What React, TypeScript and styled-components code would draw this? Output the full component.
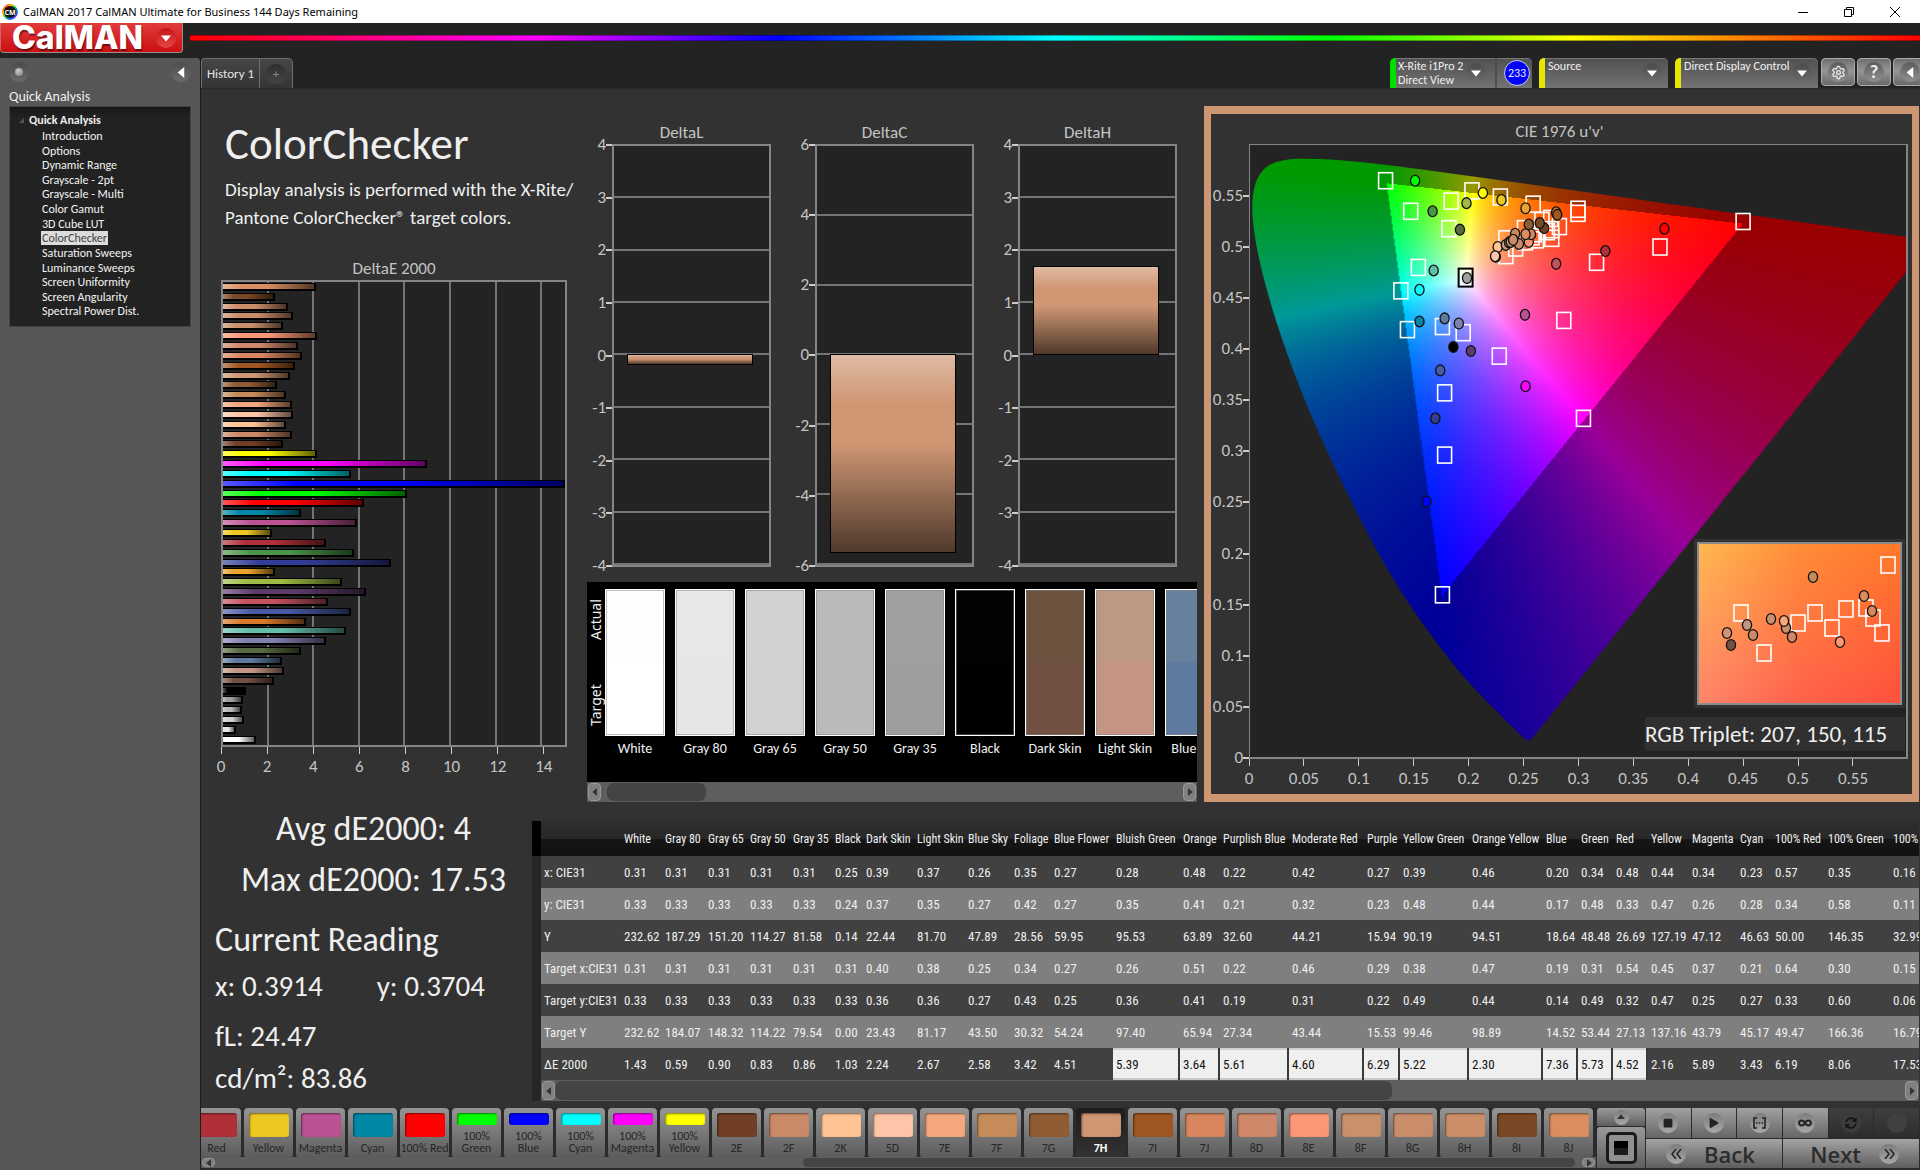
import React, { useLayoutEffect, useRef } from 'react';
import styled, { createGlobalStyle, css } from 'styled-components';
import { FaPlay, FaStop, FaInfinity, FaSyncAlt } from 'react-icons/fa';
import { LuSettings } from 'react-icons/lu';

const Global = createGlobalStyle`
  *, *::before, *::after { box-sizing: border-box; }
  html, body, #root { height: 100%; }
  body { margin: 0; background: #232323; color: #efefef; font-family: Carlito, Lato, sans-serif; font-size: 17px; overflow: hidden; }
  button, select { font: inherit; color: inherit; border: 0; padding: 0; margin: 0; background: none; }
  ul { list-style: none; margin: 0; padding: 0; }
  h1, h2, p { margin: 0; font-weight: 400; }
`;

/* ---------- data ---------- */

type Patch = { name: string; color: string; actual?: string; de: number };

const patches: Patch[] = [
  { name: 'White', color: '#ffffff', actual: '#fffdff', de: 1.43 },
  { name: 'Gray 80', color: '#e6e6e6', actual: '#e8e7e5', de: 0.59 },
  { name: 'Gray 65', color: '#d1d1d1', actual: '#d4d1d2', de: 0.9 },
  { name: 'Gray 50', color: '#bababa', actual: '#bababa', de: 0.83 },
  { name: 'Gray 35', color: '#9e9e9e', actual: '#a0a0a0', de: 0.86 },
  { name: 'Black', color: '#000000', actual: '#020204', de: 1.03 },
  { name: 'Dark Skin', color: '#735142', actual: '#6d5240', de: 2.24 },
  { name: 'Light Skin', color: '#c39582', actual: '#bb9985', de: 2.67 },
  { name: 'Blue Sky', color: '#5e7a9f', actual: '#67809d', de: 2.58 },
  { name: 'Foliage', color: '#586b40', de: 3.42 },
  { name: 'Blue Flower', color: '#8280b1', de: 4.51 },
  { name: 'Bluish Green', color: '#63bda9', de: 5.39 },
  { name: 'Orange', color: '#d97a2b', de: 3.64 },
  { name: 'Purplish Blue', color: '#4a5ba6', de: 5.61 },
  { name: 'Moderate Red', color: '#c5525f', de: 4.6 },
  { name: 'Purple', color: '#5d3c6c', de: 6.29 },
  { name: 'Yellow Green', color: '#a0bb45', de: 5.22 },
  { name: 'Orange Yellow', color: '#eaa32d', de: 2.3 },
  { name: 'Blue', color: '#333c96', de: 7.36 },
  { name: 'Green', color: '#4a9548', de: 5.73 },
  { name: 'Red', color: '#b03039', de: 4.52 },
  { name: 'Yellow', color: '#edc823', de: 2.16 },
  { name: 'Magenta', color: '#bb5293', de: 5.89 },
  { name: 'Cyan', color: '#0087a6', de: 3.43 },
  { name: '100% Red', color: '#ff0000', de: 6.19 },
  { name: '100% Green', color: '#00ff00', de: 8.06 },
  { name: '100% Blue', color: '#0000ff', de: 17.53 },
  { name: '100% Cyan', color: '#00ffff', de: 5.6 },
  { name: '100% Magenta', color: '#ff00ff', de: 8.95 },
  { name: '100% Yellow', color: '#ffff00', de: 4.13 },
  { name: '2E', color: '#703f26', de: 2.65 },
  { name: '2F', color: '#cb8a67', de: 3.03 },
  { name: '2K', color: '#ffc394', de: 2.78 },
  { name: '5D', color: '#ffc5a8', de: 3.08 },
  { name: '7E', color: '#f5a87d', de: 3.03 },
  { name: '7F', color: '#c58c5a', de: 2.78 },
  { name: '7G', color: '#905c33', de: 2.35 },
  { name: '7H', color: '#cf9673', de: 2.93 },
  { name: '7I', color: '#a05620', de: 3.17 },
  { name: '7J', color: '#d8865e', de: 3.47 },
  { name: '8D', color: '#cf8869', de: 3.27 },
  { name: '8E', color: '#fc9775', de: 4.13 },
  { name: '8F', color: '#c9906c', de: 2.65 },
  { name: '8G', color: '#ca8d6a', de: 3.05 },
  { name: '8H', color: '#cc8e69', de: 2.85 },
  { name: '8I', color: '#7a4824', de: 2.27 },
  { name: '8J', color: '#da8d5f', de: 4.1 },
];

const columnWidths = [80, 41, 43, 42, 43, 42, 31, 51, 51, 46, 40, 62, 67, 40, 69, 75, 36, 69, 74, 35, 35, 35, 41, 48, 35, 53, 65, 60];
const tableWidth = columnWidths.reduce((sum, w) => sum + w, 0);

const readings: { label: string; values: string }[] = [
  { label: 'x: CIE31', values: '0.31 0.31 0.31 0.31 0.31 0.25 0.39 0.37 0.26 0.35 0.27 0.28 0.48 0.22 0.42 0.27 0.39 0.46 0.20 0.34 0.48 0.44 0.34 0.23 0.57 0.35 0.16' },
  { label: 'y: CIE31', values: '0.33 0.33 0.33 0.33 0.33 0.24 0.37 0.35 0.27 0.42 0.27 0.35 0.41 0.21 0.32 0.23 0.48 0.44 0.17 0.48 0.33 0.47 0.26 0.28 0.34 0.58 0.11' },
  { label: 'Y', values: '232.62 187.29 151.20 114.27 81.58 0.14 22.44 81.70 47.89 28.56 59.95 95.53 63.89 32.60 44.21 15.94 90.19 94.51 18.64 48.48 26.69 127.19 47.12 46.63 50.00 146.35 32.99' },
  { label: 'Target x:CIE31', values: '0.31 0.31 0.31 0.31 0.31 0.31 0.40 0.38 0.25 0.34 0.27 0.26 0.51 0.22 0.46 0.29 0.38 0.47 0.19 0.31 0.54 0.45 0.37 0.21 0.64 0.30 0.15' },
  { label: 'Target y:CIE31', values: '0.33 0.33 0.33 0.33 0.33 0.33 0.36 0.36 0.27 0.43 0.25 0.36 0.41 0.19 0.31 0.22 0.49 0.44 0.14 0.49 0.32 0.47 0.25 0.27 0.33 0.60 0.06' },
  { label: 'Target Y', values: '232.62 184.07 148.32 114.22 79.54 0.00 23.43 81.17 43.50 30.32 54.24 97.40 65.94 27.34 43.44 15.53 99.46 98.89 14.52 53.44 27.13 137.16 43.79 45.17 49.47 166.36 16.79' },
  { label: 'ΔE 2000', values: '1.43 0.59 0.90 0.83 0.86 1.03 2.24 2.67 2.58 3.42 4.51 5.39 3.64 5.61 4.60 6.29 5.22 2.30 7.36 5.73 4.52 2.16 5.89 3.43 6.19 8.06 17.53' },
];
const editableFrom = 11;
const editableTo = 20;

const targets: [number, number][] = [
  [0.124, 0.565], [0.147, 0.535], [0.184, 0.545], [0.203, 0.555], [0.229, 0.549], [0.259, 0.542], [0.3, 0.537], [0.3, 0.533],
  [0.451, 0.525], [0.375, 0.5], [0.317, 0.485], [0.182, 0.518], [0.154, 0.48], [0.138, 0.457], [0.144, 0.419], [0.176, 0.422],
  [0.195, 0.416], [0.228, 0.393], [0.287, 0.428], [0.305, 0.332], [0.178, 0.357], [0.178, 0.296], [0.176, 0.159],
  [0.234, 0.4915], [0.234, 0.508], [0.243, 0.499], [0.251, 0.518], [0.252, 0.505], [0.262, 0.507], [0.26, 0.513], [0.267, 0.526],
  [0.272, 0.515], [0.275, 0.528], [0.276, 0.5085], [0.276, 0.517], [0.283, 0.52], [0.258, 0.51],
];

const measured: [number, number, string][] = [
  [0.151, 0.565, '#00ff00'], [0.167, 0.535, '#4a9548'], [0.198, 0.543, '#a0bb45'], [0.213, 0.553, '#ffff00'], [0.23, 0.546, '#edc823'],
  [0.252, 0.538, '#eaa32d'], [0.28, 0.534, '#d97a2b'], [0.281, 0.5315, '#a05620'], [0.192, 0.517, '#586b40'], [0.168, 0.477, '#63bda9'],
  [0.155, 0.458, '#00ffff'], [0.2515, 0.4335, '#bb5293'], [0.28, 0.4835, '#c5525f'], [0.325, 0.496, '#b03039'], [0.379, 0.518, '#ff0000'],
  [0.155, 0.427, '#0087a6'], [0.178, 0.43, '#5e7a9f'], [0.191, 0.425, '#8280b1'], [0.186, 0.402, '#000000'], [0.202, 0.398, '#5d3c6c'],
  [0.174, 0.379, '#4a5ba6'], [0.252, 0.3635, '#ff00ff'], [0.1695, 0.332, '#333c96'], [0.1615, 0.2505, '#0000ff'],
  [0.2266, 0.5, '#ffc394'], [0.2248, 0.4905, '#735142'], [0.2242, 0.491, '#ffc5a8'], [0.234, 0.502, '#c39582'], [0.237, 0.5045, '#cc8e69'],
  [0.2385, 0.505, '#c9906c'], [0.2425, 0.513, '#c58c5a'], [0.246, 0.503, '#cf8869'], [0.2407, 0.507, '#ca8d6a'], [0.255, 0.522, '#905c33'],
  [0.255, 0.505, '#fc9775'], [0.257, 0.5125, '#d8865e'], [0.252, 0.5125, '#da8d5f'], [0.269, 0.5185, '#703f26'], [0.265, 0.5235, '#7a4824'],
];

const insetTargets: [number, number][] = [[44, 71], [67, 111], [101, 81], [118, 71], [135, 86], [149, 67], [169, 66], [176, 76], [185, 91], [191, 23]];
const insetMeasured: [number, number, string][] = [
  [30, 91, '#cf9673'], [34, 103, '#735142'], [50, 83, '#c39582'], [56, 93, '#cb8a67'], [74, 77, '#c9906c'], [89, 86, '#cc8e69'],
  [87, 79, '#f5a87d'], [95, 95, '#cf8869'], [143, 100, '#fc9775'], [116, 35, '#c58c5a'], [167, 54, '#da8d5f'], [175, 69, '#d8865e'],
];

const spectralLocus: [number, number][] = [
  [0.1741, 0.005], [0.1733, 0.0048], [0.1714, 0.0051], [0.1689, 0.0069], [0.1644, 0.0109], [0.1566, 0.0177], [0.144, 0.0297], [0.1241, 0.0578],
  [0.1096, 0.0868], [0.0913, 0.1327], [0.0687, 0.2007], [0.0454, 0.295], [0.0235, 0.4127], [0.0082, 0.5384], [0.0039, 0.6548],
  [0.0139, 0.7502], [0.0389, 0.812], [0.0743, 0.8338], [0.1142, 0.8262], [0.1547, 0.8059], [0.2296, 0.7543], [0.3016, 0.6923],
  [0.3731, 0.6245], [0.4441, 0.5547], [0.5125, 0.4866], [0.5752, 0.4242], [0.627, 0.3725], [0.6915, 0.3083], [0.7347, 0.2653],
];

/* ---------- window chrome ---------- */

const Window = styled.div`display: flex; flex-direction: column; height: 100vh; overflow: hidden; background: #232323;`;
const TitleBar = styled.header`
  display: flex; align-items: center; height: 23px; padding: 0 2px; flex: none;
  background: #fff; color: #000; font-family: "Noto Sans", sans-serif; font-size: 11px;
`;
const WindowTitle = styled.span`flex: 1; padding-left: 5px;`;
const WindowButton = styled.button`width: 46px; height: 23px; display: grid; place-items: center;`;
const Banner = styled.div`display: flex; align-items: flex-start; gap: 7px; height: 35px; flex: none;`;
const Logo = styled.button`
  display: flex; align-items: center; justify-content: space-between; width: 183px; height: 30px; padding: 0 6px 0 11px;
  border: 1px solid #9a8a8a; border-top: 0; border-left-color: #c66; border-radius: 0 0 4px 4px;
  background: linear-gradient(#e23c3c, #cb0f12); color: #fff; font-family: Inter, sans-serif; font-weight: 800; font-size: 32px; line-height: 28px;
  text-shadow: 1px 2px 1px rgba(0, 0, 0, 0.45);
`;
const Round = styled.span<{ $size?: number; $tone?: string }>`
  display: grid; place-items: center; flex: none; width: ${p => p.$size ?? 20}px; height: ${p => p.$size ?? 20}px; border-radius: 50%;
  background: ${p => p.$tone ?? 'linear-gradient(#4c4c4c, #6c6c6c)'};
`;
const Rainbow = styled.div`
  flex: 1; height: 6px; margin-top: 12px; border: solid rgba(0, 0, 0, 0.35); border-width: 1px 0;
  background: linear-gradient(to right, #f00, #f0f 20%, #00f 34%, #0ff 50%, #0f0 66%, #ff0 80%, #f00);
`;
const Body = styled.div`display: flex; flex: 1; min-height: 0;`;

/* ---------- sidebar ---------- */

const Sidebar = styled.aside`width: 201px; flex: none; padding: 4px 9px 0 9px; background: #565656; border-right: 1px solid #1c1c1c; border-radius: 0 4px 0 0;`;
const SidebarTools = styled.div`display: flex; justify-content: space-between;`;
const SidebarTitle = styled.h2`margin-top: 7px; padding-bottom: 2px; font-size: 14px; line-height: 15px;`;
const Tree = styled.nav`height: 221px; padding: 6px 7px 0 9px; border: 1px solid #444; background: linear-gradient(#161616, #222 10px); font-size: 12px;`;
const TreeRoot = styled.button`display: flex; align-items: center; gap: 5px; height: 14px; font-weight: 700; line-height: 14px;`;
const TreeItems = styled.ul`display: grid; grid-auto-rows: 1fr; height: 190px; margin-top: 2px; padding-left: 22px;`;
const TreeLink = styled.a<{ $active: boolean }>`
  display: inline-block; padding: 0 1px; line-height: 14px; color: #f2f2f2; text-decoration: none;
  ${p => p.$active && css`background: #dcdcdc; color: #444;`}
`;

/* ---------- tabs and toolbar ---------- */

const Main = styled.main`display: flex; flex-direction: column; flex: 1; min-width: 0; background: #323232;`;
const TabBar = styled.div`display: flex; justify-content: space-between; height: 31px; flex: none; background: #232323; border-bottom: 1px solid #2a2a2a;`;
const Tabs = styled.div`display: flex; border: 1px solid #6e6e6e; border-bottom: 0; border-radius: 4px 5px 0 0; background: linear-gradient(#464646, #343434); font-size: 13px;`;
const Tab = styled.button`padding: 0 4px; width: 58px; border-right: 1px solid #6e6e6e; color: #e4e4e4; white-space: nowrap;`;
const AddTab = styled.button`width: 32px; display: grid; place-items: center; color: #888;`;
const Tools = styled.div`display: flex; align-items: flex-start; gap: 7px; height: 30px;`;
const Device = styled.div<{ $led: string; $width: number }>`
  position: relative; display: flex; width: ${p => p.$width}px; height: 30px; border-left: 6px solid ${p => p.$led};
  border-radius: 5px 5px 0 0; background: linear-gradient(#505050, #727272); box-shadow: inset 0 1px #777; font-size: 12px; line-height: 14px;
`;
const DeviceButton = styled.button`display: flex; align-items: center; justify-content: space-between; flex: 1; padding: 0 9px 0 2px; border-right: 2px solid #4c4c4c; text-align: left; white-space: pre;`;
const DeviceSelect = styled.select`appearance: none; width: 100%; height: 30px; padding: 1px 0 15px 3px; line-height: 14px; option { color: #000; }`;
const SelectArrow = styled.span`position: absolute; right: 6px; top: 5px; pointer-events: none;`;
const MeterCount = styled.span`align-self: center; margin: 0 2px 0 7px; display: grid; place-items: center; width: 26px; height: 26px; border-radius: 50%; border: 1px solid #ccd; background: #00f; font-size: 12px; line-height: 12px;`;
const ToolButtons = styled.div`display: flex; gap: 2px; margin-left: -4px; width: 99px; overflow: hidden;`;
const ToolButton = styled.button`display: grid; place-items: center; flex: none; width: 34px; height: 28px; border: 1px solid #aaa; border-radius: 4px; background: linear-gradient(#6f6f6f, #969696 45%, #6a6a6a); color: #eee; font-weight: 700; font-size: 19px; line-height: 20px;`;

/* ---------- charts ---------- */

const Analysis = styled.section`display: grid; grid-template-columns: minmax(0, 386fr) minmax(0, 617fr) minmax(0, 716fr); flex: none; padding-top: 17px;`;
const Intro = styled.div`padding: 15px 20px 0;`;
const PageTitle = styled.h1`padding-left: 4px; font-size: 45px; line-height: 46px;`;
const Lead = styled.p`padding: 9px 0 0 4px; font-size: 19px; line-height: 28px; white-space: nowrap;`;
const ChartTitle = styled.h2`color: #c4c4c4; font-size: 17px; line-height: 20px; text-align: center;`;
const plotFrame = css`border: 2px solid #858585; background-color: #232323;`;
const DeltaETitle = styled(ChartTitle)`margin-top: 27px; padding-bottom: 1px;`;
const BarsPlot = styled.div`
  ${plotFrame} display: flex; flex-direction: column; height: 467px; overflow: hidden;
  background-image: repeating-linear-gradient(to right, transparent 0 calc(100% * 2 / 15 - 2px), #747474 0 calc(100% * 2 / 15));
`;
const BarSlot = styled.div`flex: 1; display: flex; align-items: center;`;
const Bar = styled.div`
  height: 8px; border: 1px solid #000; border-width: 1px 2px 2px 0;
  background-image: linear-gradient(to right, rgba(255, 255, 255, 0.35), transparent 22%, transparent 50%, rgba(0, 0, 0, 0.62));
`;
const XAxis = styled.div<{ $step: number; $count: number }>`
  display: grid; grid-template-columns: repeat(${p => p.$count}, ${p => p.$step}%); margin-left: -${p => p.$step / 2}%; width: 100%;
  color: #c4c4c4; text-align: center; line-height: 18px; white-space: nowrap;
`;
const XTick = styled.span`&::before { content: ''; display: block; width: 1px; height: 7px; margin: 0 auto 4px; background: #ccc; }`;
const YAxis = styled.div<{ $width: number; $top?: number }>`
  display: flex; flex-direction: column; justify-content: space-between; flex: none; width: ${p => p.$width}px; padding: ${p => p.$top ?? 0}px 0 0; color: #c4c4c4;
`;
const YTick = styled.span`
  display: flex; justify-content: flex-end; align-items: center; height: 2px; line-height: 2px;
  &::after { content: ''; width: 6px; height: 2px; background: #ccc; }
`;

const Middle = styled.div`display: flex; flex-direction: column; padding: 17px 7px 0 0; min-width: 0;`;
const Deltas = styled.div`display: grid; grid-template-columns: repeat(3, 1fr); gap: 24px; padding: 0 20px 0 5px; height: 459px;`;
const DeltaBody = styled.div`display: flex; height: 424px; padding-top: 1px;`;
const DeltaPlot = styled.div<{ $lines: number }>`
  ${plotFrame} flex: 1; display: flex; flex-direction: column; padding: 0 9% 0 7%;
  background-image: repeating-linear-gradient(to bottom, transparent 0 calc(100% / ${p => p.$lines} - 2px), #747474 0 calc(100% / ${p => p.$lines}));
`;
const DeltaBar = styled.div`
  border: 1px solid #000; background-color: #cf9673; flex: none;
  background-image: linear-gradient(rgba(255, 255, 255, 0.35), transparent 25%, transparent 45%, rgba(0, 0, 0, 0.62));
`;

const Swatches = styled.div`display: flex; height: 200px; padding-top: 7px; background: #000; overflow: hidden; gap: 10px;`;
const SwatchAxis = styled.div`
  display: flex; justify-content: space-between; writing-mode: vertical-rl; transform: rotate(180deg); flex: none; width: 18px; height: 147px; margin-right: -10px;
  padding: 10px 0; font-family: "Noto Sans", sans-serif; font-size: 14px; line-height: 18px;
`;
const Swatch = styled.figure`flex: none; width: 60px; margin: 0; text-align: center; font-size: 14px; line-height: 26px; white-space: nowrap;`;
const SwatchColor = styled.div<{ $actual: string; $target: string }>`
  height: 147px; border: 1px solid #fff; box-shadow: inset 0 0 0 1px rgba(128, 128, 128, 0.5);
  background: linear-gradient(${p => p.$actual} 50%, ${p => p.$target} 50%);
`;

const ScrollTrack = styled.div<{ $h: number }>`display: flex; align-items: center; height: ${p => p.$h}px; padding: 1px; background: #5e5e5e; flex: none; min-width: 0;`;
const ScrollArrow = styled.button`flex: none; width: 13px; height: 100%; display: grid; place-items: center; border-radius: 4px; background: #808080; border: 1px solid #999; color: #333;`;
const ScrollRail = styled.div`flex: 1; height: 100%; display: flex;`;
const ScrollThumb = styled.div`height: 100%; border-radius: 7px; background: #444;`;

/* ---------- chromaticity ---------- */

const CiePanel = styled.div`border: solid #cf9673; border-width: 8px 7px; margin-right: 1px; padding: 6px 4px 0 0; background: #323232; height: 696px; margin-bottom: 19px;`;
const CieTitle = styled(ChartTitle)`height: 24px; line-height: 23px;`;
const CieBody = styled.div`display: flex; height: 615px;`;
const CiePlot = styled.div`${plotFrame} border-width: 1px 2px 2px 1px; position: relative; flex: 1; min-width: 0; overflow: hidden;`;
const Field = styled.canvas`display: block; width: 100%; height: 100%;`;
const Overlay = styled.svg`position: absolute; inset: 0; width: 100%; height: 100%;`;
const Inset = styled.div`position: absolute; right: 1px; bottom: 49px; width: 211px; height: 169px; padding: 3px; background: #323232;`;
const Triplet = styled.output`position: absolute; right: 1px; bottom: 6px; width: 260px; height: 34px; background: #303030; font-size: 23px; line-height: 34px;`;
const CieXAxis = styled.div`margin-left: 38px;`;

/* ---------- readings ---------- */

const Results = styled.section`display: flex; flex: none;`;
const Summary = styled.div`width: 331px; flex: none; padding-left: 14px; white-space: nowrap;`;
const Headlines = styled.div`margin: -18px 0 15px;`;
const Headline = styled.p`font-size: 34px; line-height: 51px; text-align: center;`;
const Current = styled.h2`font-size: 34px; line-height: 40px;`;
const Values = styled.p<{ $gap: number }>`display: flex; gap: 54px; padding-top: ${p => p.$gap}px; font-size: 29px; line-height: 36px;`;
const TableArea = styled.div`flex: 1; min-width: 0; margin-right: 1px; padding-left: 9px; background: linear-gradient(#000 35px, #262626 35px); overflow: hidden;`;
const Grid = styled.table`table-layout: fixed; border-collapse: collapse; font-family: "Roboto Condensed", Carlito, sans-serif; font-size: 13px; white-space: nowrap;`;
const HeadCell = styled.th`height: 35px; padding: 0 0 0 3px; text-align: left; font-weight: 400; font-size: 12px;`;
const HeadRow = styled.tr`background: linear-gradient(#2e2e2e, #282828 50%, #161616 51%, #111);`;
const DataRow = styled.tr<{ $alt: boolean }>`background: ${p => (p.$alt ? '#7f7f7f' : '#414141')};`;
const Cell = styled.td<{ $edit?: boolean }>`
  height: 32px; padding: 0 0 0 3px; text-align: left;
  ${p => p.$edit && css`background: #efefef; color: #111; box-shadow: inset -2px 0 #3a3a3a, inset 0 -2px #c8c8c8, inset 0 2px #d0d0d0;`}
`;
const RowLabel = styled.th`height: 32px; padding: 0 0 0 3px; text-align: left; font-weight: 400;`;

/* ---------- bottom bar ---------- */

const BottomBar = styled.footer`display: flex; gap: 1px; margin-top: auto; padding: 0 1px 2px 0; height: 62px; flex: none; background: #2b2b2b;`;
const Strip = styled.div`flex: 1; min-width: 0; display: flex; flex-direction: column;`;
const PatchRow = styled.div`display: flex; justify-content: flex-end; gap: 3px; height: 49px; padding-right: 3px; overflow: hidden;`;
const PatchButton = styled.button<{ $active: boolean }>`
  flex: none; display: flex; flex-direction: column; align-items: center; width: 49px; height: 49px; padding: 5px 0 3px; border-radius: 4px 4px 2px 2px;
  background: ${p => (p.$active ? 'linear-gradient(#1c1c1c, #333)' : 'linear-gradient(#959595, #5c5c5c)')}; color: ${p => (p.$active ? '#fff' : '#262626')};
  font-weight: ${p => (p.$active ? 700 : 400)}; font-size: 12px; line-height: 12px;
`;
const PatchColor = styled.span<{ $color: string }>`width: 40px; flex: 1; border-radius: 3px; background: ${p => p.$color}; box-shadow: inset 1px 1px 2px rgba(0, 0, 0, 0.5);`;
const PatchLabel = styled.span<{ $two: boolean }>`display: block; padding-top: 5px; white-space: pre;`;
const Flyout = styled.div`width: 48px; display: grid; grid-template-rows: 18px 1fr; gap: 1px;`;
const FlyoutButton = styled.button`display: grid; place-items: center; border-radius: 3px 3px 0 0; background: linear-gradient(#9a9a9a, #5e5e5e);`;
const StopFrame = styled.span`display: grid; place-items: center; width: 31px; height: 32px; border: 3px solid #1a1a1a; border-radius: 5px; background: #909090;`;
const StopMark = styled.span`width: 14px; height: 14px; background: linear-gradient(#000 50%, #1c1c1c 50%);`;
const Transport = styled.div`width: 273px; display: grid; grid-template-columns: repeat(6, 1fr); grid-template-rows: 30px 1fr; gap: 1px;`;
const TransportButton = styled.button<{ $off?: boolean }>`
  display: grid; place-items: center; color: ${p => (p.$off ? '#151515' : '#222')};
  background: ${p => (p.$off ? 'linear-gradient(#3e3e3e, #2c2c2c)' : 'linear-gradient(#a0a0a0, #666)')};
`;
const StepButton = styled.button<{ $side: 'start' | 'end' }>`
  grid-column: span 3; display: flex; align-items: center; justify-content: flex-${p => p.$side}; gap: 18px; padding: 0 20px; background: linear-gradient(#a4a4a4, #5e5e5e); color: #2c2c2c;
  font-family: "Open Sans", sans-serif; font-weight: 600; font-size: 22px; line-height: 26px;
`;

/* ---------- pieces ---------- */

const Caret = ({ dir, size = 8, color = '#fff' }: { dir: 'down' | 'left' | 'right' | 'up'; size?: number; color?: string }) => {
  const turn = { down: 0, left: 90, up: 180, right: 270 }[dir];
  return (
    <svg width={size} height={size} viewBox="0 0 10 10" aria-hidden="true">
      <path d="M0 2.5h10L5 8.5z" fill={color} transform={`rotate(${turn} 5 5)`} />
    </svg>
  );
};

const Scrollbar = ({ height, start, length, label }: { height: number; start: number; length: number; label: string }) => (
  <ScrollTrack $h={height}>
    <ScrollArrow aria-label={`Scroll ${label} left`}><Caret dir="left" color="#333" /></ScrollArrow>
    <ScrollRail><ScrollThumb style={{ marginLeft: `${start}%`, width: `${length}%` }} /></ScrollRail>
    <ScrollArrow aria-label={`Scroll ${label} right`}><Caret dir="right" color="#333" /></ScrollArrow>
  </ScrollTrack>
);

const pages = ['Introduction', 'Options', 'Dynamic Range', 'Grayscale - 2pt', 'Grayscale - Multi', 'Color Gamut', '3D Cube LUT', 'ColorChecker',
  'Saturation Sweeps', 'Luminance Sweeps', 'Screen Uniformity', 'Screen Angularity', 'Spectral Power Dist.'];

const DeltaChart = ({ title, max, step, value }: { title: string; max: number; step: number; value: number }) => {
  const ticks: number[] = [];
  for (let t = max; t >= -max; t -= step) ticks.push(t);
  const top = ((max - Math.max(value, 0)) / (2 * max)) * 419;
  const height = (Math.abs(value) / (2 * max)) * 419 + 2;
  return (
    <div>
      <ChartTitle>{title}</ChartTitle>
      <DeltaBody>
        <YAxis $width={20}>{ticks.map(t => <YTick key={t}>{t}</YTick>)}</YAxis>
        <DeltaPlot $lines={ticks.length - 1}><DeltaBar style={{ marginTop: top - 2, height }} /></DeltaPlot>
      </DeltaBody>
    </div>
  );
};

const U_MAX = 0.6;
const V_MAX = 0.6;
const W = 658;
const H = 612;
const px = (u: number) => (u / U_MAX) * W;
const py = (v: number) => H - (v / V_MAX) * H;

function paintField(canvas: HTMLCanvasElement) {
  const ctx = canvas.getContext('2d');
  if (!ctx) return;
  const image = ctx.createImageData(W, H);
  for (let j = 0; j < H; j++) {
    for (let i = 0; i < W; i++) {
      const u = ((i + 0.5) / W) * U_MAX;
      const v = (1 - (j + 0.5) / H) * V_MAX;
      const d = 6 * u - 16 * v + 12;
      const x = (9 * u) / d;
      const y = (4 * v) / d;
      const z = 1 - x - y;
      const lin = [3.2406 * x - 1.5372 * y - 0.4986 * z, -0.9689 * x + 1.8758 * y + 0.0415 * z, 0.0557 * x - 0.204 * y + 1.057 * z];
      const dim = Math.min(...lin) < 0 ? 0.6 : 1;
      const peak = Math.max(...lin);
      const k = (j * W + i) * 4;
      lin.forEach((c, n) => { image.data[k + n] = (255 * dim * Math.max(c, 0)) / peak; });
      image.data[k + 3] = 255;
    }
  }
  ctx.putImageData(image, 0, 0);
  const uv = spectralLocus.map(([x, y]) => {
    const d = -2 * x + 12 * y + 3;
    return [px((4 * x) / d), py((9 * y) / d)];
  });
  ctx.globalCompositeOperation = 'destination-in';
  ctx.beginPath();
  ctx.moveTo(uv[0][0], uv[0][1]);
  for (let i = 1; i < uv.length - 1; i++) {
    ctx.quadraticCurveTo(uv[i][0], uv[i][1], (uv[i][0] + uv[i + 1][0]) / 2, (uv[i][1] + uv[i + 1][1]) / 2);
  }
  ctx.lineTo(uv[uv.length - 1][0], uv[uv.length - 1][1]);
  ctx.closePath();
  ctx.fill();
}

const Target = ({ x, y, dark }: { x: number; y: number; dark?: boolean }) => (
  <g fill="none">
    {dark && <rect x={x - 7} y={y - 9} width="14" height="18" stroke="#000" strokeWidth="2" />}
    <rect x={x - (dark ? 5 : 7)} y={y - (dark ? 7 : 8)} width={dark ? 10 : 14} height={dark ? 14 : 16} stroke="#fff" strokeWidth={dark ? 1 : 1.6} />
  </g>
);
const Dot = ({ x, y, fill }: { x: number; y: number; fill: string }) => <ellipse cx={x} cy={y} rx="4.6" ry="5.4" fill={fill} stroke="#111" strokeWidth="1.3" />;

const CieChart = () => {
  const field = useRef<HTMLCanvasElement>(null);
  useLayoutEffect(() => { if (field.current) paintField(field.current); }, []);
  const steps = Array.from({ length: 12 }, (_, i) => String(Math.round(i * 5) / 100));
  return (
    <CiePanel>
      <CieTitle>CIE 1976 u'v'</CieTitle>
      <CieBody>
        <YAxis $width={38} $top={51}>{[...steps].reverse().map(s => <YTick key={s}>{s}</YTick>)}</YAxis>
        <CiePlot>
          <Field ref={field} width={W} height={H} />
          <Overlay viewBox={`0 0 ${W} ${H}`} preserveAspectRatio="none" role="img" aria-label="Measured and target chromaticities">
            {targets.map(([u, v], i) => <Target key={i} x={px(u)} y={py(v)} />)}
            {measured.map(([u, v, c], i) => <Dot key={i} x={px(u)} y={py(v)} fill={c} />)}
            <Target x={px(0.1972)} y={py(0.47)} dark />
            <Dot x={px(0.1985)} y={py(0.4695)} fill="#a0a0a0" />
          </Overlay>
          <Inset>
            <svg width="205" height="163" viewBox="0 0 205 163" role="img" aria-label="Selected area enlarged">
              <defs>
                <linearGradient id="warm-left" x2="0" y2="1"><stop stopColor="#ffba52" /><stop offset="1" stopColor="#ff856c" /></linearGradient>
                <linearGradient id="warm-right" x2="0" y2="1"><stop stopColor="#ff782a" /><stop offset="1" stopColor="#ff503c" /></linearGradient>
                <linearGradient id="fade"><stop stopColor="#000" /><stop offset="0.5" stopColor="#aaa" /><stop offset="1" stopColor="#fff" /></linearGradient>
                <mask id="across"><rect width="205" height="163" fill="url(#fade)" /></mask>
              </defs>
              <rect width="205" height="163" fill="url(#warm-left)" />
              <rect width="205" height="163" fill="url(#warm-right)" mask="url(#across)" />
              {insetTargets.map(([x, y], i) => <Target key={i} x={x} y={y} />)}
              {insetMeasured.map(([x, y, c], i) => <Dot key={i} x={x} y={y} fill={c} />)}
              <rect x="1" y="1" width="203" height="161" fill="none" stroke="#8c8c8c" strokeWidth="2" />
            </svg>
          </Inset>
          <Triplet>RGB Triplet: 207, 150, 115</Triplet>
        </CiePlot>
      </CieBody>
      <CieXAxis><XAxis $count={12} $step={100 / 12}>{steps.map(s => <XTick key={s}>{s}</XTick>)}</XAxis></CieXAxis>
    </CiePanel>
  );
};

const stripPatches = patches.slice(20);
const knob = 'linear-gradient(#7c7c7c, #a8a8a8)';

export default function App() {
  return (
    <Window>
      <Global />
      <TitleBar>
        <svg width="16" height="18" viewBox="0 0 16 18" aria-hidden="true">
          <defs><linearGradient id="ring" x2="1" y2="1"><stop stopColor="#f03" /><stop offset="0.3" stopColor="#fb0" /><stop offset="0.5" stopColor="#0c4" /><stop offset="0.75" stopColor="#06f" /><stop offset="1" stopColor="#c0f" /></linearGradient></defs>
          <circle cx="8" cy="9" r="7" fill="#111" stroke="url(#ring)" strokeWidth="1.8" />
          <text x="8" y="11.5" fontSize="7" fontWeight="700" textAnchor="middle" fill="#fff">CM</text>
        </svg>
        <WindowTitle>CalMAN 2017 CalMAN Ultimate for Business 144 Days Remaining</WindowTitle>
        <WindowButton aria-label="Minimize"><svg width="10" height="10" stroke="#000"><path d="M0 5.5h10" /></svg></WindowButton>
        <WindowButton aria-label="Restore"><svg width="10" height="10" fill="none" stroke="#000"><path d="M.5 2.5h7v7h-7zM2.5 2.5v-2h7v7h-2" /></svg></WindowButton>
        <WindowButton aria-label="Close"><svg width="10" height="10" stroke="#000"><path d="M0 0l10 10M10 0L0 10" /></svg></WindowButton>
      </TitleBar>
      <Banner>
        <Logo>CalMAN<Round $tone="linear-gradient(#c81416, #e54848)"><Caret dir="down" size={10} /></Round></Logo>
        <Rainbow />
      </Banner>
      <Body>
        <Sidebar>
          <SidebarTools>
            <Round $tone="linear-gradient(#4a4a4a, #6a6a6a)"><Round $size={8} $tone="radial-gradient(circle at 40% 35%, #ccc, #777)" /></Round>
            <button aria-label="Collapse sidebar"><Round><Caret dir="left" size={11} /></Round></button>
          </SidebarTools>
          <SidebarTitle>Quick Analysis</SidebarTitle>
          <Tree aria-label="Quick Analysis">
            <TreeRoot><svg width="5" height="5" aria-hidden="true"><path d="M5 0v5H0z" fill="#555" /></svg>Quick Analysis</TreeRoot>
            <TreeItems>{pages.map(p => <li key={p}><TreeLink href="#" $active={p === 'ColorChecker'}>{p}</TreeLink></li>)}</TreeItems>
          </Tree>
        </Sidebar>
        <Main>
          <TabBar>
            <Tabs><Tab>History 1</Tab><AddTab aria-label="Add history"><Round $tone="linear-gradient(#2e2e2e, #444)">+</Round></AddTab></Tabs>
            <Tools>
              <Device $led="#00e000" $width={142}>
                <DeviceButton>{'X-Rite i1Pro 2\nDirect View'}<Round><Caret dir="down" size={10} /></Round></DeviceButton>
                <MeterCount>233</MeterCount>
              </Device>
              <Device $led="#e6e600" $width={129}>
                <DeviceSelect aria-label="Source"><option>Source</option></DeviceSelect>
                <SelectArrow><Round><Caret dir="down" size={10} /></Round></SelectArrow>
              </Device>
              <Device $led="#e6e600" $width={143}>
                <DeviceSelect aria-label="Display"><option>Direct Display Control</option></DeviceSelect>
                <SelectArrow><Round><Caret dir="down" size={10} /></Round></SelectArrow>
              </Device>
              <ToolButtons>
                <ToolButton aria-label="Settings"><Round $tone="linear-gradient(#5c5c5c, #909090)"><LuSettings size={15} /></Round></ToolButton>
                <ToolButton aria-label="Help"><Round $tone="linear-gradient(#5c5c5c, #909090)">?</Round></ToolButton>
                <ToolButton aria-label="Collapse panel"><Round $tone="linear-gradient(#5c5c5c, #909090)"><Caret dir="left" size={11} /></Round></ToolButton>
              </ToolButtons>
            </Tools>
          </TabBar>

          <Analysis>
            <Intro>
              <PageTitle>ColorChecker</PageTitle>
              <Lead>Display analysis is performed with the X-Rite/<br />Pantone ColorChecker® target colors.</Lead>
              <DeltaETitle>DeltaE 2000</DeltaETitle>
              <BarsPlot>
                {[...patches].reverse().map(p => (
                  <BarSlot key={p.name}><Bar style={{ width: `${Math.min((p.de / 15) * 100, 102)}%`, backgroundColor: p.color }} /></BarSlot>
                ))}
              </BarsPlot>
              <XAxis $count={8} $step={200 / 15}>{[0, 2, 4, 6, 8, 10, 12, 14].map(t => <XTick key={t}>{t}</XTick>)}</XAxis>
            </Intro>
            <Middle>
              <Deltas>
                <DeltaChart title="DeltaL" max={4} step={1} value={-0.18} />
                <DeltaChart title="DeltaC" max={6} step={2} value={-5.66} />
                <DeltaChart title="DeltaH" max={4} step={1} value={1.68} />
              </Deltas>
              <Swatches>
                <SwatchAxis><span>Target</span><span>Actual</span></SwatchAxis>
                {patches.slice(0, 9).map(p => (
                  <Swatch key={p.name}><SwatchColor $actual={p.actual ?? p.color} $target={p.color} /><figcaption>{p.name}</figcaption></Swatch>
                ))}
              </Swatches>
              <Scrollbar height={20} start={1} length={17} label="swatches" />
            </Middle>
            <CieChart />
          </Analysis>

          <Results>
            <Summary>
              <Headlines><Headline>Avg dE2000: 4</Headline><Headline>Max dE2000: 17.53</Headline></Headlines>
              <Current>Current Reading</Current>
              <Values $gap={8}><span>x: 0.3914</span><span>y: 0.3704</span></Values>
              <Values $gap={14}>fL: 24.47</Values>
              <Values $gap={6}>cd/m²: 83.86</Values>
            </Summary>
            <TableArea>
              <Grid style={{ width: tableWidth }}>
                <colgroup>{columnWidths.map((w, i) => <col key={i} style={{ width: w }} />)}</colgroup>
                <thead><HeadRow><HeadCell aria-label="Quantity" />{patches.slice(0, 27).map(p => <HeadCell key={p.name} scope="col">{p.name}</HeadCell>)}</HeadRow></thead>
                <tbody>
                  {readings.map((r, i) => (
                    <DataRow key={r.label} $alt={i % 2 === 1}>
                      <RowLabel scope="row">{r.label}</RowLabel>
                      {r.values.split(' ').map((v, c) => <Cell key={c} $edit={i === 6 && c >= editableFrom && c <= editableTo}>{v}</Cell>)}
                    </DataRow>
                  ))}
                </tbody>
              </Grid>
              <Scrollbar height={21} start={0} length={62} label="readings" />
            </TableArea>
          </Results>

          <BottomBar>
            <Strip>
              <PatchRow>
                {stripPatches.map(p => {
                  const two = /^100% (?!Red)/.test(p.name);
                  return (
                    <PatchButton key={p.name} $active={p.name === '7H'}>
                      <PatchColor $color={p.color} />
                      <PatchLabel $two={two}>{two ? p.name.replace(' ', '\n') : p.name}</PatchLabel>
                    </PatchButton>
                  );
                })}
              </PatchRow>
              <Scrollbar height={11} start={43} length={56.5} label="patches" />
            </Strip>
            <Flyout>
              <FlyoutButton aria-label="Show options"><Round $size={15} $tone={knob}><Caret dir="up" color="#333" /></Round></FlyoutButton>
              <FlyoutButton aria-label="Pattern window"><StopFrame><StopMark /></StopFrame></FlyoutButton>
            </Flyout>
            <Transport>
              <TransportButton aria-label="Stop"><Round $tone={knob}><FaStop size={10} /></Round></TransportButton>
              <TransportButton aria-label="Play"><Round $tone={knob}><FaPlay size={10} /></Round></TransportButton>
              <TransportButton aria-label="Read series">
                <Round $tone={knob}><svg width="13" height="12" fill="none" stroke="#222" strokeWidth="1.6"><path d="M4 1H1v10h3M9 1h3v10H9M3 6h1.5M5.8 6h1.5M8.6 6h1.5" /></svg></Round>
              </TransportButton>
              <TransportButton aria-label="Read continuously"><Round $tone={knob}><FaInfinity size={14} /></Round></TransportButton>
              <TransportButton aria-label="Refresh" $off><Round $tone="#3c3c3c"><FaSyncAlt size={12} /></Round></TransportButton>
              <TransportButton aria-label="Record" $off><Round $tone="#404040" /></TransportButton>
              <StepButton $side="start"><Round $tone={knob}><svg width="11" height="10" fill="none" stroke="#222" strokeWidth="1.5"><path d="M5 0L1 5l4 5M10 0L6 5l4 5" /></svg></Round>Back</StepButton>
              <StepButton $side="end">Next<Round $tone={knob}><svg width="11" height="10" fill="none" stroke="#222" strokeWidth="1.5"><path d="M1 0l4 5-4 5M6 0l4 5-4 5" /></svg></Round></StepButton>
            </Transport>
          </BottomBar>
        </Main>
      </Body>
    </Window>
  );
}
